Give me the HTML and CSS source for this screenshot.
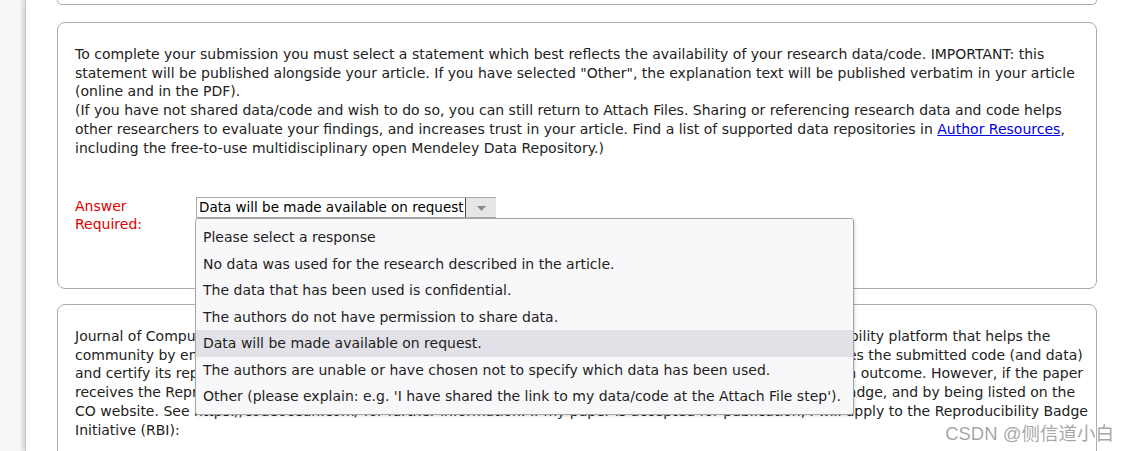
FILE: index.html
```html
<!DOCTYPE html>
<html>
<head>
<meta charset="utf-8">
<link rel="stylesheet" href="styles.css">
</head>
<body>
<div class="page">
  <div class="panel panel-top"></div>

  <div class="panel panel-data">
    <p class="intro">To complete your submission you must select a statement which best reflects the availability of your research data/code. IMPORTANT: this statement will be published alongside your article. If you have selected "Other", the explanation text will be published verbatim in your article (online and in the PDF).<br>(If you have not shared data/code and wish to do so, you can still return to Attach Files. Sharing or referencing research data and code helps other researchers to evaluate your findings, and increases trust in your article. Find a list of supported data repositories in <a href="#" class="link">Author Resources</a>, including the free-to-use multidisciplinary open Mendeley Data Repository.)</p>

    <div class="answer-row">
      <div class="answer-label">Answer Required:</div>
      <div class="select-wrap">
        <div class="select">
          <span class="select-value">Data will be made available on request</span>
          <span class="select-arrow"><svg width="9" height="5" viewBox="0 0 9 5"><path d="M0 0 H9 L4.5 5 Z" fill="#8a8a8a"/></svg></span>
        </div>
        <ul class="options">
          <li>Please select a response</li>
          <li>No data was used for the research described in the article.</li>
          <li>The data that has been used is confidential.</li>
          <li>The authors do not have permission to share data.</li>
          <li class="active">Data will be made available on request.</li>
          <li>The authors are unable or have chosen not to specify which data has been used.</li>
          <li>Other (please explain: e.g. 'I have shared the link to my data/code at the Attach File step').</li>
        </ul>
      </div>
    </div>
  </div>

  <div class="panel panel-co">
    <p class="co-text">Journal of Computational Physics is partnering with Code Ocean, a cloud-based, open computational reproducibility platform that helps the<br>community by enabling researchers and developers to share, discover, reuse and run code. Code Ocean verifies the submitted code (and data)<br>and certify its reproducibility. Submission to Code Ocean is optional and doesn't affect the peer review decision outcome. However, if the paper<br>receives the Reproducibility Badge, the authors will be credited on ScienceDirect with visible Reproducibility badge, and by being listed on the<br>CO website. See https://codeocean.com/ for further information. If my paper is accepted for publication, I will apply to the Reproducibility Badge<br>Initiative (RBI):</p>
  </div>

  <div class="watermark">CSDN @侧信道小白</div>
</div>
</body>
</html>
```

FILE: styles.css
```css
html, body {
  margin: 0;
  padding: 0;
  height: 451px;
  overflow: hidden;
  background: #f7f7f7;
}

.page {
  position: relative;
  margin-left: 25px;
  height: 451px;
  background: #ffffff;
  border-left: 1px solid #c8c8c8;
  box-shadow: -3px 0 3px rgba(0, 0, 0, 0.12);
  padding: 0 31px 0 31px;
  font-family: "DejaVu Sans", Verdana, sans-serif;
  font-size: 14px;
  line-height: 18.7px;
  color: #222222;
}

.panel {
  border: 1px solid #ababab;
  border-radius: 8px;
  background: #ffffff;
  padding: 0 17px;
}

.panel-top {
  height: 4px;
  border-top: none;
  border-top-left-radius: 0;
  border-top-right-radius: 0;
  margin-bottom: 17px;
}

.panel-data {
  height: 267px;
  padding-top: 22px;
  box-sizing: border-box;
  margin-bottom: 15px;
}

.intro {
  margin: 0;
}

.link {
  color: #0000ee;
  text-decoration: underline;
}

.answer-row {
  display: flex;
  margin-top: 40px;
}

.answer-label {
  width: 121px;
  padding-right: 10px;
  box-sizing: border-box;
  color: #e00000;
  font-size: 14px;
  line-height: 18px;
}

.select-wrap {
  position: relative;
}

.select {
  display: flex;
  height: 21px;
  border: 1px solid #a9a9a9;
  border-right: none;
  box-sizing: border-box;
  width: 300px;
  background: #ffffff;
}

.select-value {
  color: #000000;
  padding-left: 2px;
  line-height: 19px;
  font-size: 13.5px;
  border-right: 1px solid #444;
  white-space: nowrap;
  width: 269px;
  box-sizing: border-box;
}

.select-arrow {
  flex: 1;
  background: #e6e6e6;
  display: flex;
  align-items: center;
  justify-content: center;
  padding-top: 2px;
}

.options {
  position: absolute;
  left: -1px;
  top: 21px;
  width: 659px;
  margin: 0;
  padding: 5px 0 4px 0;
  list-style: none;
  background: #f8f8fa;
  border: 1px solid #a6a6a6;
  border-radius: 3px;
  box-shadow: 1px 1px 3px rgba(0, 0, 0, 0.15);
  box-sizing: border-box;
  z-index: 2;
}

.options li {
  height: 26.5px;
  line-height: 26.5px;
  padding-left: 7px;
  font-size: 14px;
  color: #1e1e1e;
  white-space: nowrap;
}

.options li.active {
  background: #e1e1e7;
}

.panel-co {
  height: 200px;
  padding-top: 22px;
  box-sizing: border-box;
}

.co-text {
  margin: 0;
  white-space: nowrap;
}

.watermark {
  position: absolute;
  right: 14px;
  bottom: 7px;
  font-family: "Liberation Sans", "Noto Sans CJK SC", sans-serif;
  font-size: 18.5px;
  color: rgba(150, 150, 150, 0.85);
  text-shadow: 0 0 2px #ffffff;
  z-index: 3;
}
```
